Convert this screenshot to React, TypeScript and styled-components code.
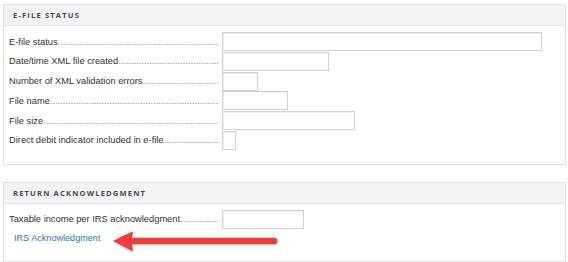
import React from "react";
import styled, { createGlobalStyle } from "styled-components";

const GlobalStyle = createGlobalStyle`
  body {
    margin: 0;
    background: #ffffff;
    font-family: "Liberation Sans", Arial, sans-serif;
  }
`;

const Page = styled.div`
  position: relative;
  width: 568px;
  height: 262px;
  padding: 4px 3px 0 3px;
  box-sizing: border-box;
  display: flex;
  flex-direction: column;
  gap: 17px;
`;

const Panel = styled.section`
  width: 563px;
  box-sizing: border-box;
  border: 1px solid #e0e0e0;
  background: #ffffff;
`;

const PanelHeader = styled.div`
  height: 20px;
  display: flex;
  align-items: center;
  padding-left: 9px;
  background: #f3f4f6;
  border-bottom: 1px solid #e4e4e6;
  font-family: "Open Sans", sans-serif;
  font-weight: 700;
  font-size: 7.6px;
  letter-spacing: 1.15px;
  color: #4a4a4a;
`;

const PanelBody = styled.div<{ $bottom: number }>`
  padding: 6px 0 ${({ $bottom }) => $bottom}px 5px;
  display: flex;
  flex-direction: column;
  gap: 0.8px;
`;

const Row = styled.div`
  display: flex;
  align-items: center;
  height: 19px;
`;

const Label = styled.div`
  width: 210px;
  margin-right: 3px;
  display: flex;
  align-items: baseline;
  font-size: 9.3px;
  color: #333333;
  white-space: nowrap;
  overflow: hidden;
`;

const Leader = styled.span`
  flex: 1;
  overflow: hidden;
  color: #8a8a8a;
  &::after {
    content: "................................................................................................................";
  }
`;

const Field = styled.div<{ $w: number }>`
  width: ${({ $w }) => $w}px;
  height: 19px;
  box-sizing: border-box;
  border: 1px solid #d2d2d2;
  box-shadow: inset 1px 1px 0 #f0f0f0;
  background: #ffffff;
`;

const LinkRow = styled.div`
  height: 17px;
  display: flex;
  align-items: center;
  padding-left: 5px;
`;

const Link = styled.a`
  font-size: 9.1px;
  color: #2b79b0;
  text-decoration: none;
`;

const Arrow = styled.svg`
  position: absolute;
  left: 108px;
  top: 228px;
`;

const statusRows: [string, number][] = [
  ["E-file status", 320],
  ["Date/time XML file created", 107],
  ["Number of XML validation errors", 36],
  ["File name", 66],
  ["File size", 133],
  ["Direct debit indicator included in e-file", 14],
];

export default function App() {
  return (
    <>
      <GlobalStyle />
      <Page>
        <Panel>
          <PanelHeader>E-FILE STATUS</PanelHeader>
          <PanelBody $bottom={14}>
            {statusRows.map(([label, w]) => (
              <Row key={label}>
                <Label>
                  {label}
                  <Leader />
                </Label>
                <Field $w={w} />
              </Row>
            ))}
          </PanelBody>
        </Panel>
        <Panel>
          <PanelHeader>RETURN ACKNOWLEDGMENT</PanelHeader>
          <PanelBody $bottom={14}>
            <Row>
              <Label>
                Taxable income per IRS acknowledgment
                <Leader />
              </Label>
              <Field $w={82} />
            </Row>
            <LinkRow>
              <Link href="#">IRS Acknowledgment</Link>
            </LinkRow>
          </PanelBody>
        </Panel>
        <Arrow width="175" height="30" viewBox="0 0 175 30">
          <defs>
            <filter id="sh" x="-10%" y="-40%" width="120%" height="180%">
              <feDropShadow dx="0.5" dy="1" stdDeviation="0.8" floodColor="#000" floodOpacity="0.25" />
            </filter>
          </defs>
          <g filter="url(#sh)" fill="#e9403e" stroke="none">
            <line x1="24" y1="13" x2="166" y2="13" stroke="#e9403e" strokeWidth="6.5" strokeLinecap="round" />
            <path d="M5 13 Q16 7 25 3.5 Q23 13 25 23.5 Q16 19 5 13 Z" />
          </g>
        </Arrow>
      </Page>
    </>
  );
}
